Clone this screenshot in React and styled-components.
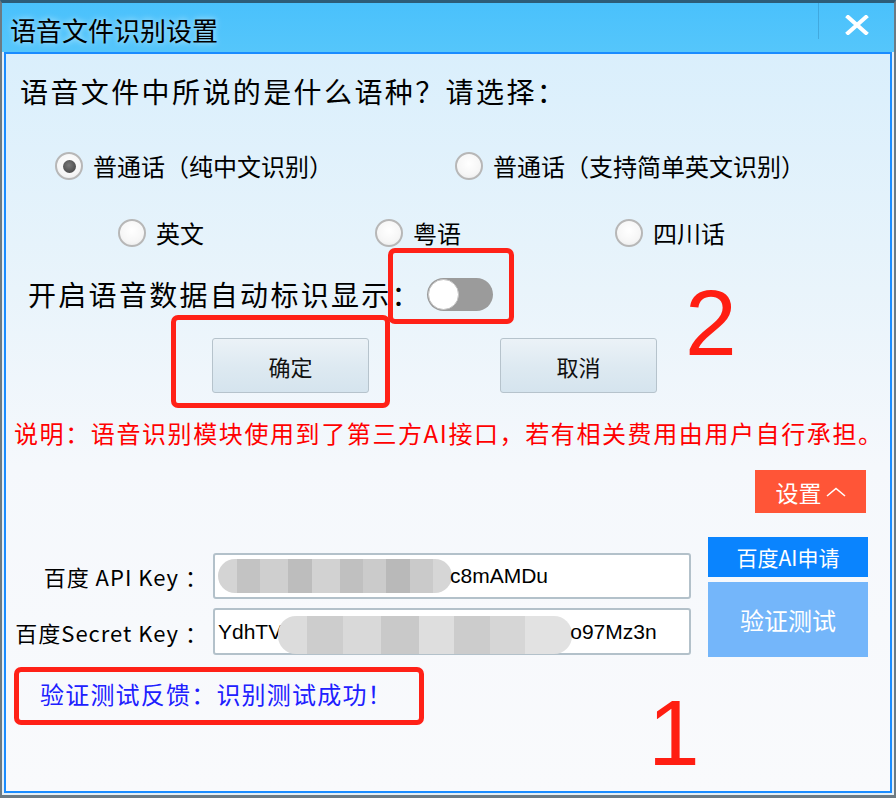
import React from "react";
import styled, { createGlobalStyle } from "styled-components";

const GlobalStyle = createGlobalStyle`
  html, body {
    margin: 0;
    padding: 0;
    background: #ffffff;
  }
  body {
    font-family: "Noto Sans CJK SC", "Noto Sans", sans-serif;
    color: #000;
  }
`;

const Stage = styled.div`
  position: relative;
  width: 896px;
  height: 798px;
  overflow: hidden;
`;

const Window = styled.div`
  box-sizing: border-box;
  width: 896px;
  height: 798px;
  display: flex;
  flex-direction: column;
  border-style: solid;
  border-color: #6c7a83;
  border-width: 0 2px 3px 2px;
  border-top: 3px solid #2d5c78;
  background: #e4eff6;
`;

const TitleBar = styled.div`
  height: 49px;
  flex: none;
  display: flex;
  justify-content: space-between;
  align-items: flex-start;
  background: linear-gradient(180deg, #4ac1fc 0%, #55c6fb 100%);
  padding-left: 8px;
`;

const Title = styled.div`
  margin-top: 10px;
  font-size: 26px;
  line-height: 34px;
  white-space: nowrap;
  text-shadow: 0 0 6px rgba(255, 255, 255, 0.75);
`;

const CloseButton = styled.div`
  width: 75px;
  height: 29px;
  display: flex;
  align-items: center;
  justify-content: center;
  padding-top: 7px;
  border-left: 1px solid rgba(40, 120, 170, 0.35);
`;

const Body = styled.div`
  flex: 1;
  display: flex;
  padding: 0 2px 2px 2px;
`;

const Panel = styled.div`
  flex: 1;
  display: flex;
  flex-direction: column;
  border: 2px solid #1a8cff;
  background: linear-gradient(180deg, #daeffc 0%, #e9f4fb 32%, #f5f8fc 56%, #f9fafc 100%);
  overflow: hidden;
`;

const Question = styled.div`
  margin-top: 19px;
  padding-left: 14px;
  font-size: 28px;
  line-height: 36px;
  letter-spacing: 2.4px;
  white-space: nowrap;
`;

const RadioRow = styled.div`
  display: grid;
  grid-template-columns: ${(p) => p.$cols};
  padding-left: ${(p) => p.$indent}px;
  margin-top: ${(p) => p.$top}px;
  height: 36px;
  align-items: center;
`;

const RadioItem = styled.label`
  display: flex;
  align-items: center;
  gap: 10px;
  font-size: 24px;
  line-height: 36px;
  white-space: nowrap;
`;

const RadioCircle = styled.span`
  box-sizing: border-box;
  width: 28px;
  height: 28px;
  border-radius: 50%;
  border: 2px solid #b7b7b7;
  background: radial-gradient(circle at 50% 40%, #ffffff 0%, #f6f6f6 60%, #e6e6e6 100%);
  display: flex;
  align-items: center;
  justify-content: center;

  &::after {
    content: "";
    display: ${(p) => (p.$checked ? "block" : "none")};
    width: 13px;
    height: 13px;
    border-radius: 50%;
    background: radial-gradient(circle at 45% 40%, #7a7a7a 0%, #4e4e4e 70%, #3e3e3e 100%);
  }
`;

const ToggleRow = styled.div`
  display: flex;
  align-items: center;
  height: 40px;
  margin-top: 23px;
  padding-left: 22px;
`;

const ToggleLabel = styled.span`
  width: 399px;
  font-size: 28px;
  line-height: 40px;
  letter-spacing: 2.3px;
  white-space: nowrap;
`;

const Switch = styled.span`
  box-sizing: border-box;
  width: 66px;
  height: 33px;
  border-radius: 17px;
  background: #9b9b9b;
  display: flex;
  align-items: center;
  padding-left: 1px;
`;

const Knob = styled.span`
  box-sizing: border-box;
  width: 31px;
  height: 31px;
  border-radius: 50%;
  background: #ffffff;
  border: 1px solid #c4c4c4;
`;

const ButtonRow = styled.div`
  display: flex;
  gap: 131px;
  padding-left: 206px;
  margin-top: 24px;
`;

const DialogButton = styled.button`
  box-sizing: border-box;
  width: 157px;
  height: 55px;
  border: 1px solid #b6c3cc;
  border-radius: 3px;
  background: linear-gradient(180deg, #ebf2f7 0%, #dde9f1 55%, #d5e4ee 100%);
  font-family: "Noto Sans CJK SC", sans-serif;
  font-size: 22px;
  color: #111;
  padding: 0;
  display: flex;
  align-items: center;
  justify-content: center;
`;

const Notice = styled.div`
  margin-top: 25px;
  padding-left: 8px;
  font-size: 24px;
  line-height: 30px;
  letter-spacing: 1.6px;
  color: #ff0000;
  white-space: nowrap;
`;

const SettingsButton = styled.div`
  align-self: flex-end;
  margin-top: 22px;
  margin-right: 24px;
  width: 111px;
  height: 43px;
  background: #ff5537;
  color: #ffffff;
  font-size: 23px;
  display: flex;
  align-items: center;
  justify-content: center;
  gap: 4px;
`;

const KeySection = styled.div`
  display: flex;
  margin-top: 24px;
`;

const KeyFields = styled.div`
  display: flex;
  flex-direction: column;
  gap: 9px;
  margin-top: 16px;
`;

const KeyRow = styled.div`
  display: flex;
  align-items: center;
  gap: 5px;
`;

const KeyLabel = styled.span`
  width: 202px;
  text-align: right;
  font-size: 22px;
  line-height: 30px;
  letter-spacing: 1px;
  white-space: pre;
`;

const KeyInput = styled.div`
  box-sizing: border-box;
  width: 478px;
  height: ${(p) => p.$h}px;
  border: 2px solid #b3c1ca;
  border-radius: 3px;
  background: #ffffff;
  display: flex;
  align-items: center;
  padding-left: 3px;
  font-family: "Liberation Sans", Arial, sans-serif;
  font-size: 21px;
  white-space: nowrap;
`;

const Redacted = styled.span`
  flex: none;
  width: ${(p) => p.$w}px;
  height: ${(p) => p.$h}px;
  margin: ${(p) => p.$m};
  border-radius: 18px;
  background: ${(p) => p.$bg};
`;

const SideButtons = styled.div`
  display: flex;
  flex-direction: column;
  gap: 5px;
  margin-left: 17px;
  width: 160px;
`;

const SideButton = styled.div`
  height: ${(p) => p.$h}px;
  background: ${(p) => p.$bg};
  color: #ffffff;
  font-size: ${(p) => p.$size}px;
  display: flex;
  align-items: center;
  justify-content: center;
  white-space: nowrap;
`;

const Feedback = styled.div`
  margin-top: 22px;
  padding-left: 34px;
  font-size: 24px;
  line-height: 30px;
  letter-spacing: 1.2px;
  color: #2020ff;
  white-space: nowrap;
`;

const Mark = styled.div`
  position: absolute;
  box-sizing: border-box;
  left: ${(p) => p.$x}px;
  top: ${(p) => p.$y}px;
  width: ${(p) => p.$w}px;
  height: ${(p) => p.$h}px;
  border: 5px solid #ff2117;
  border-radius: 7px;
`;

const Digit = styled.div`
  position: absolute;
  left: ${(p) => p.$x}px;
  top: ${(p) => p.$y}px;
  font-family: "Liberation Sans", Arial, sans-serif;
  font-size: 93px;
  line-height: 1;
  color: #ff1e12;
`;

const blurA =
  "linear-gradient(90deg, #d4d4d4 0 8%, #c3c3c3 8% 18%, #cfcfcf 18% 30%, #bdbdbd 30% 40%, #d2d2d2 40% 52%, #c0c0c0 52% 62%, #cbcbcb 62% 72%, #b9b9b9 72% 82%, #cacaca 82% 92%, #d6d6d6 92% 100%)";
const blurB =
  "linear-gradient(90deg, #dcdcdc 0 10%, #cdcdcd 10% 22%, #d9d9d9 22% 35%, #c9c9c9 35% 48%, #dedede 48% 60%, #cccccc 60% 72%, #d6d6d6 72% 84%, #e2e2e2 84% 100%)";

function Radio({ checked, children }) {
  return (
    <RadioItem>
      <RadioCircle $checked={checked} />
      <span>{children}</span>
    </RadioItem>
  );
}

export default function App() {
  return (
    <Stage>
      <GlobalStyle />
      <Window>
        <TitleBar>
          <Title>语音文件识别设置</Title>
          <CloseButton>
            <svg width="24" height="20" viewBox="0 0 24 20">
              <path d="M3 2 L21 18 M21 2 L3 18" stroke="#ffffff" strokeWidth="4" strokeLinecap="square" />
            </svg>
          </CloseButton>
        </TitleBar>
        <Body>
          <Panel>
            <Question>语音文件中所说的是什么语种？请选择：</Question>
            <RadioRow $cols="400px auto" $indent={49} $top={39}>
              <Radio checked>普通话（纯中文识别）</Radio>
              <Radio>普通话（支持简单英文识别）</Radio>
            </RadioRow>
            <RadioRow $cols="257px 240px auto" $indent={112} $top={31}>
              <Radio>英文</Radio>
              <Radio>粤语</Radio>
              <Radio>四川话</Radio>
            </RadioRow>
            <ToggleRow>
              <ToggleLabel>开启语音数据自动标识显示：</ToggleLabel>
              <Switch>
                <Knob />
              </Switch>
            </ToggleRow>
            <ButtonRow>
              <DialogButton>确定</DialogButton>
              <DialogButton>取消</DialogButton>
            </ButtonRow>
            <Notice>说明：语音识别模块使用到了第三方AI接口，若有相关费用由用户自行承担。</Notice>
            <SettingsButton>
              <span>设置</span>
              <svg width="20" height="10" viewBox="0 0 20 10">
                <path d="M1 9 L10 1.5 L19 9" stroke="#ffffff" strokeWidth="1.6" fill="none" />
              </svg>
            </SettingsButton>
            <KeySection>
              <KeyFields>
                <KeyRow>
                  <KeyLabel>百度 API Key ：</KeyLabel>
                  <KeyInput $h={46}>
                    <Redacted $w={234} $h={34} $m="0 -2px 0 0" $bg={blurA} />
                    <span>c8mAMDu</span>
                  </KeyInput>
                </KeyRow>
                <KeyRow>
                  <KeyLabel>百度Secret Key ：</KeyLabel>
                  <KeyInput $h={47}>
                    <span>YdhTV</span>
                    <Redacted $w={294} $h={38} $m="6px -2px 0 -4px" $bg={blurB} />
                    <span>o97Mz3n</span>
                  </KeyInput>
                </KeyRow>
              </KeyFields>
              <SideButtons>
                <SideButton $h={40} $bg="#0a84fe" $size={21}>百度AI申请</SideButton>
                <SideButton $h={75} $bg="#74b6fa" $size={24}>验证测试</SideButton>
              </SideButtons>
            </KeySection>
            <Feedback>验证测试反馈：识别测试成功！</Feedback>
          </Panel>
        </Body>
      </Window>
      <Mark $x={388} $y={248} $w={126} $h={76} />
      <Mark $x={171} $y={315} $w={219} $h={93} />
      <Mark $x={14} $y={667} $w={410} $h={58} />
      <Digit $x={685} $y={277}>2</Digit>
      <Digit $x={648} $y={687}>1</Digit>
    </Stage>
  );
}
